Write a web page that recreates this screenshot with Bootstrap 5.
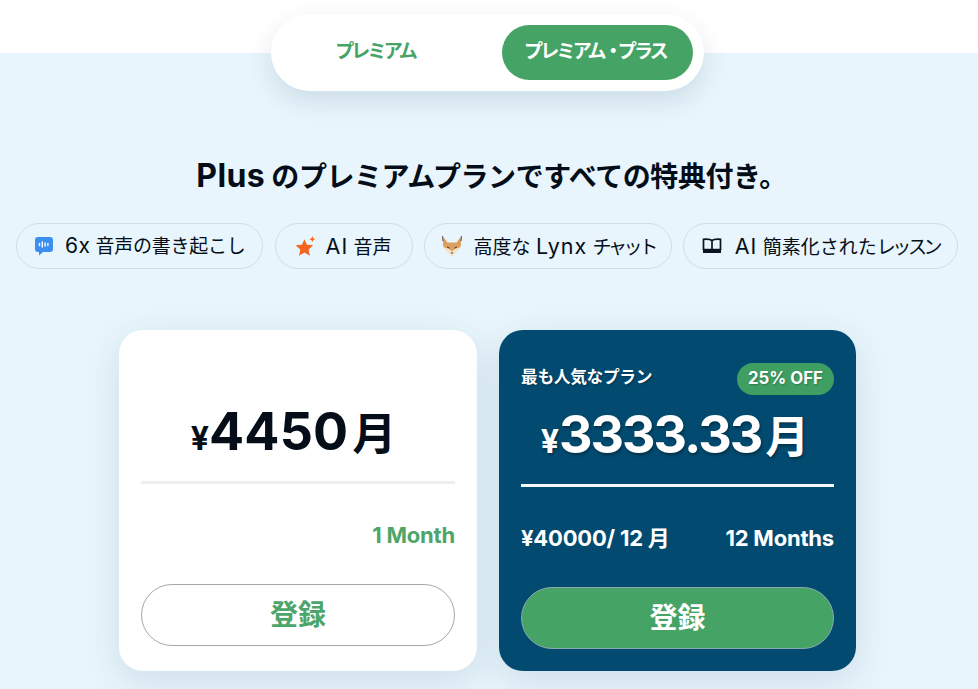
<!DOCTYPE html>
<html lang="ja">
<head>
    <meta charset="UTF-8">
    <meta name="viewport" content="width=device-width, initial-scale=1.0">
    <title>プレミアム・プラス</title>
    <link href="https://cdn.jsdelivr.net/npm/bootstrap@5.3.0/dist/css/bootstrap.min.css" rel="stylesheet">
    <style>
        body { font-family: Inter, "Noto Sans CJK JP", sans-serif; background: #fff; color: #050e18; overflow-x: hidden; }
        .top-band { height: 53px; background: #fff; }
        .plan-area { display: flow-root; background: #e8f5fc; padding-bottom: 18px; }
        .plan-toggle { width: 433px; height: 77px; margin: -39px 0 0 271px; padding: 11px; background: #fff; border-radius: 40px; box-shadow: 0 10px 26px rgba(20, 60, 90, .13); position: relative; }
        .plan-tab { height: 55px; border-radius: 28px; font-size: 19px; font-weight: 700; color: #45a465; letter-spacing: -2.800px; }
        .plan-tab.first { width: 220px; padding-right: 34px; }
        .plan-tab.on { width: 191px; padding-right: 5px; background: #45a465; color: #fff; }
        .tab-dot { letter-spacing: -5px; }
        .plan-title { margin: 66px 0 27px; padding-left: 5px; font-size: 28px; line-height: 38px; font-weight: 700; text-align: center; letter-spacing: -.45px; }
        .plan-title span { font-size: 32px; letter-spacing: .4px; }
        .perk-row { padding-left: 16px; gap: 11px; }
        .perk { height: 46px; padding: 0 16px 0 17px; border: 1px solid #cfdde5; border-radius: 23px; font-size: 19px; white-space: nowrap; gap: 11px; }
        .perk svg { flex: none; }
        .perk-first { margin-right: 1px; letter-spacing: -.25px; }
        .perk-voice { padding: 0 20px 0 19px; gap: 10px; }
        .perk-chat { padding: 0 14px 0 15px; gap: 10px; }
        .perk-chat .kana-tight { margin-right: 2px; }
        .perk-book { padding: 0 15px 0 18px; gap: 13px; }
        .lat { font-size: 21px; letter-spacing: .5px; }
        .lat-wide { font-size: 21.500px; letter-spacing: 1px; }
        .kana-tight { letter-spacing: -3.400px; margin-right: 3px; }
        .price-row { margin: 61px 0 0 119px; gap: 22px; }
        .price-card { width: 358px; height: 341px; padding: 0 22px; border-radius: 24px; background: #fff; box-shadow: 0 10px 36px rgba(20, 60, 90, .12); }
        .price-card.best { width: 357px; background: #024a70; color: #fff; }
        .best-head { height: 65px; padding-top: 33px; }
        .best-label { font-size: 16.700px; font-weight: 700; letter-spacing: -.3px; line-height: 28px; text-shadow: 1px 1px 2px rgba(0, 0, 0, .3); }
        .off-tag { background: #3f9f63; border-radius: 16px; height: 32px; width: 97px; font-size: 16.800px; font-weight: 700; text-shadow: 1px 1px 2px rgba(0, 0, 0, .25); }
        .price { font-weight: 700; text-align: center; font-size: 52px; line-height: 70px; letter-spacing: .2px; padding-right: 9px; }
        .price b { font-size: 44px; font-weight: 700; letter-spacing: 0; margin-left: 4px; }
        .price small { font-size: 32px; font-weight: 700; letter-spacing: 0; }
        .plain-price { padding-top: 67px; border-bottom: 3px solid #eee; padding-bottom: 7px; line-height: 70px; }
        .best .price { padding: 5px 5px 6px 0; line-height: 72px; margin-top: -1px; border-bottom: 3px solid #f2f8fb; letter-spacing: -2px; text-shadow: 1px 2px 3px rgba(0, 0, 0, .35); }
        .term-row { height: 100px; padding-top: 3px; font-size: 22px; font-weight: 700; letter-spacing: -.2px; }
        .term-plain { color: #4ea56a; }
        .join-btn { height: 62px; border-radius: 31px; font-size: 28px; font-weight: 700; border: 1px solid #a5a8ab; color: #4ea56a; background: #fff; }
        .best .join-btn { background: #45a465; color: #fff; border-color: #8aa8b0; }
    </style>
</head>
<body>
    <div class="top-band"></div>
    <div class="plan-area">
        <div class="plan-toggle d-flex">
            <div class="plan-tab first d-flex align-items-center justify-content-center">プレミアム</div>
            <div class="plan-tab on d-flex align-items-center justify-content-center"><span>プレミアム<span class="tab-dot">・</span>プラス</span></div>
        </div>
        <h1 class="plan-title"><span>Plus</span> のプレミアムプランですべての特典付き。</h1>
        <div class="perk-row d-flex">
            <div class="perk perk-first d-flex align-items-center">
                <svg width="20" height="20" viewBox="0 0 20 20"><path d="M4 1h12a3 3 0 0 1 3 3v9a3 3 0 0 1-3 3H9l-4 3.500V16H4a3 3 0 0 1-3-3V4a3 3 0 0 1 3-3z" fill="#3b8ff0"/><path d="M5.500 7.500v2M8.300 6v5M11.100 7v3M13.900 7.500v2" stroke="#fff" stroke-width="1.400" stroke-linecap="round"/></svg>
                <span><span class="lat">6x</span> 音声の書き起こし</span>
            </div>
            <div class="perk perk-voice d-flex align-items-center">
                <svg width="21" height="21" viewBox="0 0 20 20"><path d="M9 3l2.400 5.300 6 .6-4.500 4 1.300 5.900L9 15.800l-5.200 3 1.300-5.900-4.500-4 6-.6z" fill="#f4661f"/><path d="M16.500 0l.8 2.200 2.200.8-2.200.8-.8 2.200-.8-2.200-2.200-.8 2.200-.8z" fill="#f4661f"/></svg>
                <span><span class="lat-wide">AI</span> 音声</span>
            </div>
            <div class="perk perk-chat d-flex align-items-center">
                <svg width="24" height="24" viewBox="0 0 24 24"><path d="M2.500 2l5 6.500h9l5-6.500-.8 10.500L12 22 3.300 12.500z" fill="#dc9f5f"/><path d="M2.500 2l.4 5M21.500 2l-.4 5" stroke="#5a4a3c" stroke-width=".9"/><path d="M4 13.500c3 .2 6 2 8 4 2-2 5-3.800 8-4L12 22.500z" fill="#f7e3c8"/><path d="M10.500 18.500h3L12 20z" fill="#5a3a20"/><path d="M7 13l2.500 1M17 13l-2.500 1" stroke="#5a3a20" stroke-width="1"/></svg>
                <span>高度な <span class="lat-wide">Lynx</span> <span class="kana-tight">チャット</span></span>
            </div>
            <div class="perk perk-book d-flex align-items-center">
                <svg width="20" height="20" viewBox="0 0 20 20"><path d="M10 4.500C8.500 3.300 5 3 1.500 3.300v10.200h17V3.300C15 3 11.500 3.300 10 4.500zM10 4.500v9" fill="none" stroke="#0a1420" stroke-width="1.700"/><rect x="1" y="13" width="18" height="4" fill="#0a1420"/></svg>
                <span><span class="lat-wide">AI</span> 簡素化された<span class="kana-tight">レッスン</span></span>
            </div>
        </div>
        <div class="price-row d-flex">
            <div class="price-card">
                <div class="price plain-price"><small>¥</small>4450<b>月</b></div>
                <div class="term-row term-plain d-flex align-items-center justify-content-end">1 Month</div>
                <button type="button" class="join-btn btn w-100 d-flex align-items-center justify-content-center">登録</button>
            </div>
            <div class="price-card best">
                <div class="best-head d-flex justify-content-between align-items-start">
                    <span class="best-label">最も人気なプラン</span>
                    <span class="off-tag d-flex align-items-center justify-content-center">25% OFF</span>
                </div>
                <div class="price"><small>¥</small>3333.33<b>月</b></div>
                <div class="term-row d-flex align-items-center justify-content-between">
                    <span>¥40000/ 12 月</span>
                    <span>12 Months</span>
                </div>
                <button type="button" class="join-btn btn w-100 d-flex align-items-center justify-content-center">登録</button>
            </div>
        </div>
    </div>
    <script src="https://cdn.jsdelivr.net/npm/bootstrap@5.3.0/dist/js/bootstrap.bundle.min.js"></script>
</body>
</html>
